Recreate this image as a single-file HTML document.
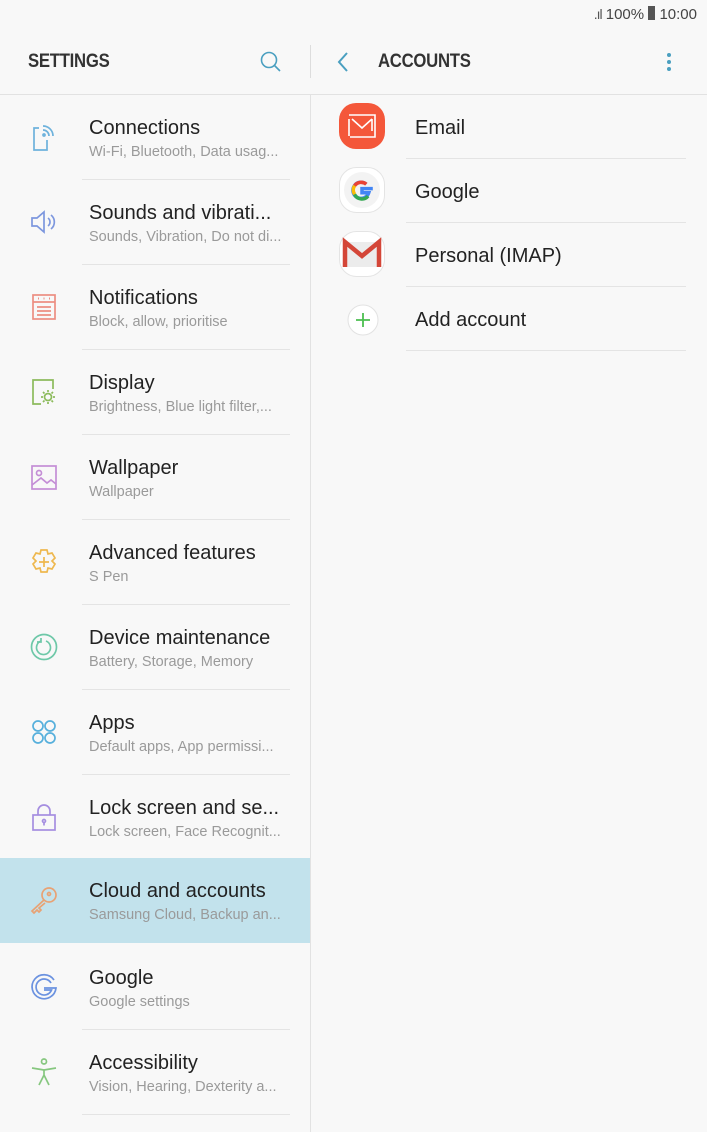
<!DOCTYPE html>
<html><head><meta charset="utf-8"><style>
*{margin:0;padding:0;box-sizing:border-box}
body{width:707px;height:1132px;background:#f8f8f8;font-family:"Liberation Sans",sans-serif;position:relative;overflow:hidden;color:#222}
.abs{position:absolute}
.hdr{font-family:"Liberation Sans",sans-serif;font-weight:bold;font-size:19px;color:#333;letter-spacing:-0.3px;transform:scaleX(0.88);transform-origin:left}
.row{position:absolute;left:0;width:310px;height:85px}
.row .t{position:absolute;left:89px;top:22px;font-size:20px;color:#222;white-space:nowrap}
.row .s{position:absolute;left:89px;top:49px;font-size:14.5px;color:#9a9a9a;white-space:nowrap}
.row .d{position:absolute;left:82px;right:20px;bottom:0;height:1px;background:#e4e4e4}
.row svg{position:absolute;left:29px;top:27px}
.acc{position:absolute;left:311px;width:396px;height:64px}
.acc .t{position:absolute;left:104px;top:22px;font-size:20px;color:#222}
.acc .d{position:absolute;left:95px;right:21px;bottom:0;height:1px;background:#e4e4e4}
</style></head><body>
<div class="abs" style="right:10px;top:6px;font-size:15px;color:#444">
<span style="font-size:14px;letter-spacing:-1px;color:#555">.ıl</span> 100% <span style="display:inline-block;width:7px;height:14px;background:#555;vertical-align:-1px"></span> 10:00</div>
<div class="abs hdr" style="left:28px;top:51px">SETTINGS</div>
<svg class="abs" style="left:259px;top:50px" width="24" height="24" viewBox="0 0 24 24" fill="none" stroke="#4a9fc0" stroke-width="1.6"><circle cx="10" cy="10" r="7.5"/><line x1="15.5" y1="15.5" x2="21" y2="21"/></svg>
<div class="abs" style="left:310px;top:45px;width:1px;height:33px;background:#ddd"></div>
<svg class="abs" style="left:336px;top:51px" width="14" height="22" viewBox="0 0 14 22" fill="none" stroke="#4a9fc0" stroke-width="2"><polyline points="11,2 3,11 11,20"/></svg>
<div class="abs hdr" style="left:378px;top:51px">ACCOUNTS</div>
<div class="abs" style="left:667px;top:53px;width:4px;height:4px;border-radius:2px;background:#4a9fc0"></div>
<div class="abs" style="left:667px;top:60px;width:4px;height:4px;border-radius:2px;background:#4a9fc0"></div>
<div class="abs" style="left:667px;top:67px;width:4px;height:4px;border-radius:2px;background:#4a9fc0"></div>
<div class="abs" style="left:0;top:94px;width:707px;height:1px;background:#e2e2e2"></div>
<div class="abs" style="left:310px;top:95px;width:1px;height:1037px;background:#e2e2e2"></div>

<div class="row" style="top:95px"><svg width="30" height="30" viewBox="0 0 30 30" fill="none" stroke="#6eb2dc" stroke-width="1.7"><path d="M10 6H5V28H18V18"/><path d="M14 8a6 6 0 0 1 6 6M14 4a10 10 0 0 1 10 10"/><circle cx="15" cy="13" r="1"/></svg><div class="t">Connections</div><div class="s">Wi-Fi, Bluetooth, Data usag...</div><div class="d"></div></div>
<div class="row" style="top:180px"><svg width="30" height="30" viewBox="0 0 30 30" fill="none" stroke="#7d97de" stroke-width="1.7"><path d="M3 11H8L15 5V25L8 19H3Z"/><path d="M19 11a5 5 0 0 1 0 8M22 8a9 9 0 0 1 0 14"/></svg><div class="t">Sounds and vibrati...</div><div class="s">Sounds, Vibration, Do not di...</div><div class="d"></div></div>
<div class="row" style="top:265px"><svg width="30" height="30" viewBox="0 0 30 30" fill="none" stroke="#ec8e82" stroke-width="1.7"><rect x="4" y="3" width="22" height="24"/><path d="M4 10H26M8 15H22M8 19H22M8 23H22"/><path d="M9 6.5h1M14.5 6.5h1M20 6.5h1" stroke-width="2"/></svg><div class="t">Notifications</div><div class="s">Block, allow, prioritise</div><div class="d"></div></div>
<div class="row" style="top:350px"><svg width="30" height="30" viewBox="0 0 30 30" fill="none" stroke="#8cbb5c" stroke-width="1.7"><path d="M12 27H4V3H24V12"/><circle cx="19" cy="20" r="3.5"/><path d="M19 13v2M19 25v2M12 20h2M24 20h2M14 15l1.5 1.5M22.5 23.5L24 25M14 25l1.5-1.5M22.5 16.5L24 15"/></svg><div class="t">Display</div><div class="s">Brightness, Blue light filter,...</div><div class="d"></div></div>
<div class="row" style="top:435px"><svg width="30" height="30" viewBox="0 0 30 30" fill="none" stroke="#c48ed6" stroke-width="1.7"><rect x="3" y="4" width="24" height="23"/><circle cx="10" cy="11" r="2.5"/><path d="M3 23L12 16L18 21L22 18L27 22"/></svg><div class="t">Wallpaper</div><div class="s">Wallpaper</div><div class="d"></div></div>
<div class="row" style="top:520px"><svg width="30" height="30" viewBox="0 0 30 30" fill="none" stroke="#eeb84f" stroke-width="1.7"><path d="M12 3h6l1 4 4-1 3 5-3 3 3 3-3 5-4-1-1 4h-6l-1-4-4 1-3-5 3-3-3-3 3-5 4 1z"/><path d="M15 10v10M10 15h10"/></svg><div class="t">Advanced features</div><div class="s">S Pen</div><div class="d"></div></div>
<div class="row" style="top:605px"><svg width="30" height="30" viewBox="0 0 30 30" fill="none" stroke="#6ec8a8" stroke-width="1.7"><circle cx="15" cy="15" r="12.5"/><path d="M12 9a7 7 0 1 0 5 0"/><path d="M12 6v4h-4"/></svg><div class="t">Device maintenance</div><div class="s">Battery, Storage, Memory</div><div class="d"></div></div>
<div class="row" style="top:690px"><svg width="30" height="30" viewBox="0 0 30 30" fill="none" stroke="#57b0dc" stroke-width="1.7"><circle cx="9" cy="9" r="5"/><circle cx="21" cy="9" r="5"/><circle cx="9" cy="21" r="5"/><circle cx="21" cy="21" r="5"/></svg><div class="t">Apps</div><div class="s">Default apps, App permissi...</div><div class="d"></div></div>
<div class="row" style="top:775px"><svg width="30" height="30" viewBox="0 0 30 30" fill="none" stroke="#a58ee0" stroke-width="1.7"><rect x="4" y="13" width="22" height="15"/><path d="M9 13V9a6 6 0 0 1 12 0v4"/><circle cx="15" cy="19" r="1.5"/><path d="M15 20.5v3"/></svg><div class="t">Lock screen and se...</div><div class="s">Lock screen, Face Recognit...</div><div class="d"></div></div>
<div class="row" style="top:858px;height:85px;background:#c2e2ec"><svg width="30" height="30" viewBox="0 0 30 30" fill="none" stroke="#e8a274" stroke-width="1.7"><circle cx="20" cy="10" r="7"/><circle cx="20" cy="9" r="1.5"/><path d="M15 15L3 26l2 2 3-3 2 2 2-2-2-2 6-5"/></svg><div class="t">Cloud and accounts</div><div class="s">Samsung Cloud, Backup an...</div></div>
<div class="row" style="top:945px"><svg width="30" height="30" viewBox="0 0 30 30" fill="none" stroke="#6b92e0" stroke-width="1.7"><path d="M25 8A12 12 0 1 0 27 16H15"/><path d="M22 11A8 8 0 1 0 22.5 18H15"/></svg><div class="t">Google</div><div class="s">Google settings</div><div class="d"></div></div>
<div class="row" style="top:1030px"><svg width="30" height="30" viewBox="0 0 30 30" fill="none" stroke="#86c77f" stroke-width="1.7"><circle cx="15" cy="4.5" r="2.5"/><path d="M3 11L15 13L27 11M15 13V18L10 28M15 18L20 28"/></svg><div class="t">Accessibility</div><div class="s">Vision, Hearing, Dexterity a...</div><div class="d"></div></div>

<div class="acc" style="top:95px"><svg class="abs" style="left:28px;top:8px" width="46" height="46" viewBox="0 0 46 46"><rect width="46" height="46" rx="17" fill="#f4573a"/><path d="M10 12H36V34H11M10 16V33M13 16L23 25L33 16M33 16V28" fill="none" stroke="#fff" stroke-width="1.6"/></svg><div class="t">Email</div><div class="d"></div></div>
<div class="acc" style="top:159px"><svg class="abs" style="left:28px;top:8px" width="46" height="46" viewBox="0 0 46 46"><rect x=".5" y=".5" width="45" height="45" rx="17" fill="#fff" stroke="#e4e4e4"/><circle cx="23" cy="23" r="18" fill="#f3f3f3"/><g transform="translate(23 23) scale(1.35) translate(-23 -23)"><path d="M31 22H23v3h5a6 6 0 1 1-1.8-6.3" fill="none" stroke="#4285f4" stroke-width="2.6"/><path d="M17.5 19.8A6 6 0 0 1 26.2 18.7" fill="none" stroke="#ea4335" stroke-width="2.6"/><path d="M17.5 26.2A6 6 0 0 1 17.5 19.8" fill="none" stroke="#fbbc05" stroke-width="2.6"/><path d="M27.5 27.5A6 6 0 0 1 17.5 26.2" fill="none" stroke="#34a853" stroke-width="2.6"/></g></svg><div class="t">Google</div><div class="d"></div></div>
<div class="acc" style="top:223px"><svg class="abs" style="left:28px;top:8px" width="46" height="46" viewBox="0 0 46 46"><rect x=".5" y=".5" width="45" height="45" rx="17" fill="#fff" stroke="#e4e4e4"/><rect x="6" y="11" width="34" height="25" fill="#ececec"/><path d="M6 36V11L23 25L40 11V36" fill="none" stroke="#d44638" stroke-width="4.5"/></svg><div class="t">Personal (IMAP)</div><div class="d"></div></div>
<div class="acc" style="top:287px"><svg class="abs" style="left:36px;top:17px" width="32" height="32" viewBox="0 0 32 32"><circle cx="16" cy="16" r="15" fill="#fff" stroke="#e2e2e2"/><path d="M16 9V23M9 16H23" stroke="#4cbf50" stroke-width="1.8"/></svg><div class="t">Add account</div><div class="d"></div></div>
</body></html>
